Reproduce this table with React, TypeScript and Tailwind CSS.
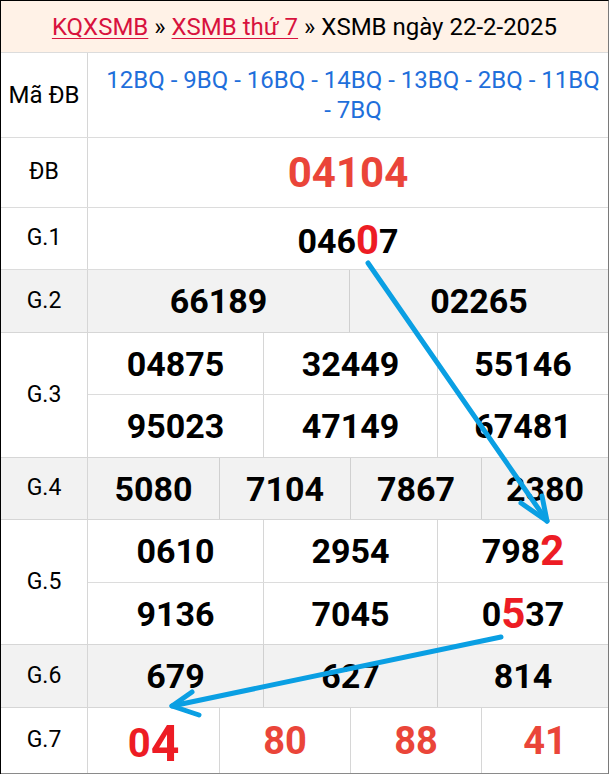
import React from "react";

const R = "#ed1c24";

function Label({ children }: { children: React.ReactNode }) {
  return (
    <div className="w-[87px] shrink-0 border-r border-[#d6d6d6] flex items-center justify-center text-[23px] text-black">
      {children}
    </div>
  );
}

function Cell({ children, className = "" }: { children: React.ReactNode; className?: string }) {
  return (
    <div className={`flex items-center justify-center font-bold text-[34px] text-black leading-none ${className}`}>
      {children}
    </div>
  );
}

export default function App() {
  return (
    <div className="relative w-[609px] bg-white" style={{ fontFamily: "Roboto, 'Noto Sans', sans-serif" }}>
      <div className="border-t border-l border-r border-t-black border-l-black border-r-[#7a7a7a]">
        {/* header */}
        <div className="h-[52px] bg-[#fff2e7] border-b border-[#dcdcdc] flex items-center justify-center text-[24px] text-black">
          <a className="text-[#d8123e] underline decoration-1 underline-offset-[3px]">KQXSMB</a>
          <span className="mx-[6px]">»</span>
          <a className="text-[#d8123e] underline decoration-1 underline-offset-[3px]">XSMB thứ 7</a>
          <span className="mx-[6px]">»</span>
          <span>XSMB ngày 22-2-2025</span>
        </div>
        {/* Ma DB */}
        <div className="h-[85px] flex border-b border-[#dcdcdc]">
          <Label>
            <span className="text-[24px]">Mã ĐB</span>
          </Label>
          <div className="flex-1 flex items-center justify-center text-center text-[24px] leading-[30px] text-[#1f6fdb] pl-[16px] pr-[6px]">
            12BQ - 9BQ - 16BQ - 14BQ - 13BQ - 2BQ - 11BQ - 7BQ
          </div>
        </div>
        {/* DB */}
        <div className="h-[70px] flex border-b border-[#dcdcdc]">
          <Label>ĐB</Label>
          <Cell className="flex-1 text-[42px] !text-[#ea4539]">04104</Cell>
        </div>
        {/* G1 */}
        <div className="h-[62px] flex border-b border-[#dcdcdc]">
          <Label>G.1</Label>
          <Cell className="flex-1 pt-[4px]">
            046<span className="text-[40px]" style={{ color: R }}>0</span>7
          </Cell>
        </div>
        {/* G2 */}
        <div className="h-[63px] flex border-b border-[#d6d6d6] bg-[#f2f2f2]">
          <Label>G.2</Label>
          <Cell className="w-[262px] border-r border-[#d0d0d0]">66189</Cell>
          <Cell className="flex-1">02265</Cell>
        </div>
        {/* G3 */}
        <div className="flex border-b border-[#d6d6d6]">
          <Label>G.3</Label>
          <div className="flex-1 flex flex-col">
            <div className="h-[62px] flex border-b border-[#dcdcdc]">
              <Cell className="w-[176px] border-r border-[#d6d6d6]">04875</Cell>
              <Cell className="w-[174px] border-r border-[#d6d6d6]">32449</Cell>
              <Cell className="flex-1">55146</Cell>
            </div>
            <div className="h-[62px] flex">
              <Cell className="w-[176px] border-r border-[#d6d6d6]">95023</Cell>
              <Cell className="w-[174px] border-r border-[#d6d6d6]">47149</Cell>
              <Cell className="flex-1">67481</Cell>
            </div>
          </div>
        </div>
        {/* G4 */}
        <div className="h-[62px] flex border-b border-[#d6d6d6] bg-[#f2f2f2]">
          <Label>G.4</Label>
          <Cell className="w-[132px] border-r border-[#d0d0d0]">5080</Cell>
          <Cell className="w-[131px] border-r border-[#d0d0d0]">7104</Cell>
          <Cell className="w-[131px] border-r border-[#d0d0d0]">7867</Cell>
          <Cell className="flex-1">2380</Cell>
        </div>
        {/* G5 */}
        <div className="flex border-b border-[#d6d6d6]">
          <Label>G.5</Label>
          <div className="flex-1 flex flex-col">
            <div className="h-[63px] flex border-b border-[#dcdcdc]">
              <Cell className="w-[176px] border-r border-[#d6d6d6]">0610</Cell>
              <Cell className="w-[174px] border-r border-[#d6d6d6]">2954</Cell>
              <Cell className="flex-1">
                798<span className="text-[42px]" style={{ color: R }}>2</span>
              </Cell>
            </div>
            <div className="h-[61px] flex">
              <Cell className="w-[176px] border-r border-[#d6d6d6]">9136</Cell>
              <Cell className="w-[174px] border-r border-[#d6d6d6]">7045</Cell>
              <Cell className="flex-1">
                0<span className="text-[42px]" style={{ color: R }}>5</span>37
              </Cell>
            </div>
          </div>
        </div>
        {/* G6 */}
        <div className="h-[63px] flex border-b border-[#d6d6d6] bg-[#f2f2f2]">
          <Label>G.6</Label>
          <Cell className="w-[176px] border-r border-[#d0d0d0]">679</Cell>
          <Cell className="w-[174px] border-r border-[#d0d0d0]">627</Cell>
          <Cell className="flex-1">814</Cell>
        </div>
        {/* G7 */}
        <div className="h-[66px] flex border-b border-[#8a8a8a]">
          <Label>G.7</Label>
          <Cell className="w-[132px] border-r border-[#d6d6d6] text-[40px] pt-[6px]">
            <span style={{ color: R }}>0</span>
            <span className="text-[50px]" style={{ color: R }}>4</span>
          </Cell>
          <Cell className="w-[131px] border-r border-[#d6d6d6] text-[38px] !text-[#ea4539]">80</Cell>
          <Cell className="w-[131px] border-r border-[#d6d6d6] text-[38px] !text-[#ea4539]">88</Cell>
          <Cell className="flex-1 text-[38px] !text-[#ea4539]">41</Cell>
        </div>
      </div>
      <svg
        className="absolute left-0 top-0 pointer-events-none"
        width="609"
        height="774"
        viewBox="0 0 609 774"
      >
        <g stroke="#0a9fe3" strokeWidth="5" strokeLinecap="round" strokeLinejoin="round" fill="none">
          <line x1="368" y1="263" x2="547" y2="521" />
          <polyline points="521,503 547,521 542,496" />
          <line x1="501" y1="637" x2="172" y2="706" />
          <polyline points="192,692 172,706 199,715" />
        </g>
      </svg>
    </div>
  );
}
